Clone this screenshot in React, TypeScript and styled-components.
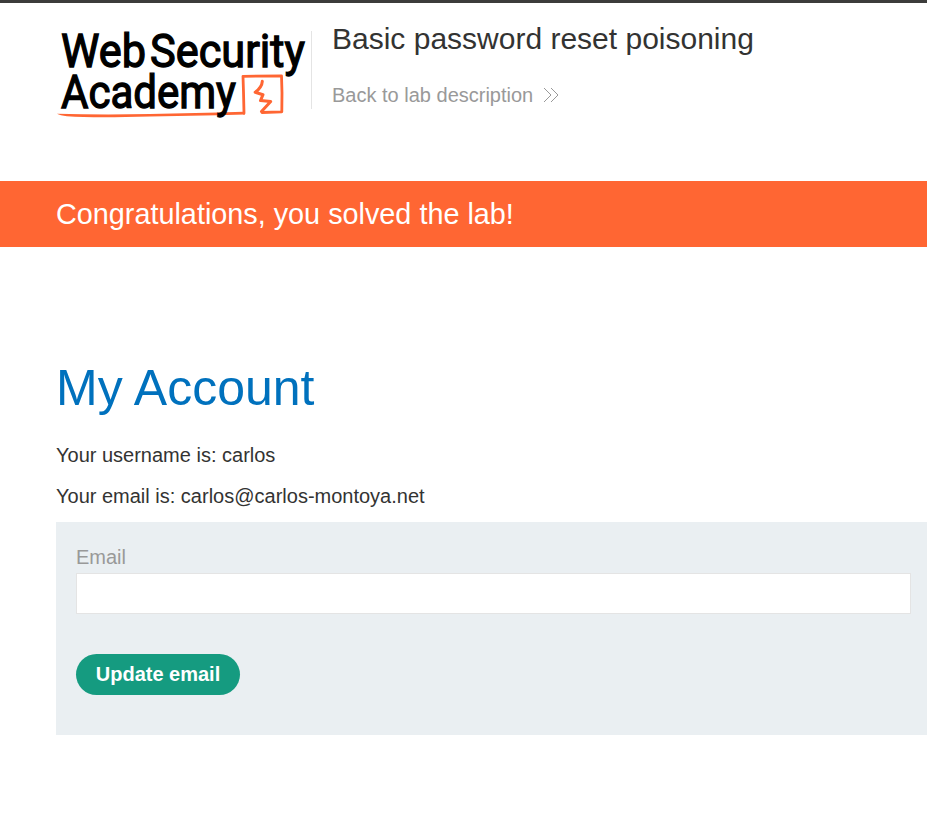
import React from 'react';
import styled, { createGlobalStyle } from 'styled-components';

const GlobalStyle = createGlobalStyle`
  * { box-sizing: border-box; }
  body {
    margin: 0;
    background: #fff;
    color: #333332;
    font-family: "Liberation Sans", Arial, sans-serif;
    font-size: 20px;
    overflow: hidden;
  }
`;

const Page = styled.div`
  height: 827px;
  overflow: hidden;
  border-top: 3px solid #3c3c3b;
`;

const Header = styled.header`
  display: flex;
  height: 178px;
  padding: 17px 0 0 56px;
`;

const Logo = styled.svg`
  flex: none;
  width: 255px;
  height: 105px;
  overflow: visible;
  font-family: Roboto, sans-serif;
  font-weight: 400;
`;

const TitleBlock = styled.div`
  height: 78px;
  margin-top: 11px;
  padding-left: 20px;
  border-left: 1px solid #e4e4e4;
`;

const LabTitle = styled.h2`
  margin: -10px 0 0;
  font-size: 30px;
  line-height: 36px;
  font-weight: 400;
`;

const BackLink = styled.a`
  display: flex;
  align-items: center;
  gap: 10px;
  margin-top: 26px;
  line-height: 24px;
  color: #999;
  text-decoration: none;
`;

const Banner = styled.section`
  height: 66px;
  padding-left: 56px;
  background: #ff6633;
  color: #fff;
  font-size: 28.8px;
  line-height: 66px;
`;

const Account = styled.main`
  padding: 111px 0 0 56px;
`;

const Heading = styled.h1`
  margin: 0;
  color: #0071bd;
  font-size: 50px;
  line-height: 60px;
  font-weight: 400;
`;

const Detail = styled.p`
  margin: 0 0 17px;
  line-height: 24px;
`;

const Details = styled.div`
  padding-top: 25px;
  height: 104px;
`;

const Form = styled.form`
  height: 213px;
  padding: 23px 16px 0 20px;
  background: #eaeff2;
`;

const Label = styled.label`
  display: block;
  line-height: 24px;
  color: #999;
`;

const Input = styled.input`
  display: block;
  width: 100%;
  height: 41px;
  margin-top: 4px;
  border: 1px solid #e4e4e4;
  background: #fff;
  font: inherit;
  outline: none;
`;

const SubmitButton = styled.button`
  display: block;
  width: 164px;
  height: 41px;
  margin-top: 40px;
  padding: 0;
  border: 0;
  border-radius: 21px;
  background: #159b80;
  color: #fff;
  font: inherit;
  font-weight: 700;
`;

const AcademyLogo = () => (
  <Logo viewBox="56 20 255 105" role="img" aria-label="Web Security Academy">
    <path d="M57 113.8Q100 115 150 114.1L218 112.5 243.5 111.8 245 114.5 218 115.2 150 116.4Q95 118 67 116.2 60 115.5 57 113.8Z" fill="#ff6633" />
    <g fill="none" stroke="#ff6633" strokeLinecap="round" strokeLinejoin="round">
      <path d="M244 113.3 243.5 92 243 76.3 281.5 75.8 282 93 281.8 111.8 262 112.5" strokeWidth="2.8" />
      <path d="M262.3 81.3Q262 87 255.2 92.3L263 94.7 260.5 100.6 270.7 101.5 261.5 111.5" strokeWidth="3" />
    </g>
    <g fontSize="46" stroke="#000" strokeWidth="1.3">
      <text x="61" y="66.7" textLength="85" lengthAdjust="spacingAndGlyphs">Web</text>
      <text x="150" y="66.7" textLength="155" lengthAdjust="spacingAndGlyphs">Security</text>
      <text x="61" y="107.7" textLength="175" lengthAdjust="spacingAndGlyphs">Academy</text>
    </g>
  </Logo>
);

const DoubleChevron = () => (
  <svg width="16" height="16" viewBox="0 0 16 16" fill="none" stroke="#999" strokeWidth="1">
    <path d="M1 1 8 8 1 15M8 1 15 8 8 15" />
  </svg>
);

export default function App() {
  return (
    <>
      <GlobalStyle />
      <Page>
        <Header>
          <AcademyLogo />
          <TitleBlock>
            <LabTitle>Basic password reset poisoning</LabTitle>
            <BackLink>
              Back to lab description
              <DoubleChevron />
            </BackLink>
          </TitleBlock>
        </Header>
        <Banner>Congratulations, you solved the lab!</Banner>
        <Account>
          <Heading>My Account</Heading>
          <Details>
            <Detail>Your username is: carlos</Detail>
            <Detail>Your email is: carlos@carlos-montoya.net</Detail>
          </Details>
          <Form>
            <Label htmlFor="email">Email</Label>
            <Input id="email" type="email" />
            <SubmitButton type="button">Update email</SubmitButton>
          </Form>
        </Account>
      </Page>
    </>
  );
}
